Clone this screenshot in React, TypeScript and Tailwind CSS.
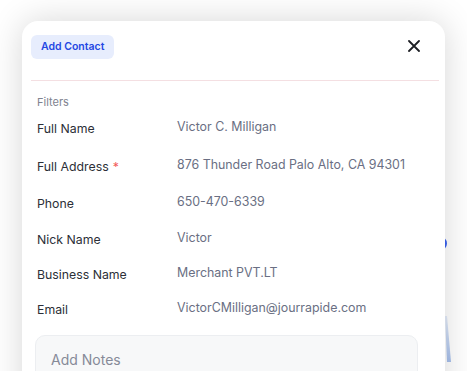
import React from "react";

const rows: { label: string; value: string; req?: boolean; h: string }[] = [
  { label: "Full Name", value: "Victor C. Milligan", h: "h-[38px]" },
  { label: "Full Address", value: "876 Thunder Road Palo Alto, CA 94301", req: true, h: "h-[37px]" },
  { label: "Phone", value: "650-470-6339", h: "h-[36px]" },
  { label: "Nick Name", value: "Victor", h: "h-[35px]" },
  { label: "Business Name", value: "Merchant PVT.LT", h: "h-[35px]" },
  { label: "Email", value: "VictorCMilligan@jourrapide.com", h: "h-[37px]" },
];

export default function App() {
  return (
    <div
      className="relative w-[467px] h-[371px] overflow-hidden bg-white"
      style={{ fontFamily: "Inter, 'Noto Sans', sans-serif" }}
    >
      {/* background content peeking behind the card */}
      <div className="absolute left-[432px] top-[236px] w-[15px] h-[15px] rounded-full border-[3px] border-[#3b63f0]" />
      <svg className="absolute left-[444px] top-[316px]" width="8" height="48" viewBox="0 0 8 48">
        <defs>
          <linearGradient id="lg" x1="0" y1="0" x2="0" y2="1">
            <stop offset="0" stopColor="#e4ecfa" />
            <stop offset="1" stopColor="#a6bfeb" />
          </linearGradient>
        </defs>
        <path d="M1 0 L3 0 L7 46 L3 46 Z" fill="url(#lg)" />
      </svg>

      <div className="pt-[21px] pl-[22px] relative">
        <div className="w-[423px] h-[400px] bg-white rounded-[16px] shadow-[0_0_34px_rgba(0,0,0,0.16)]">
          <div className="flex items-start justify-between pl-[9px] pr-[25px] pt-[14px] h-[59px]">
            <button className="h-[24px] px-[10px] rounded-[6px] bg-[#e7edfd] text-[#2448e3] text-[10.5px] font-semibold leading-[24px]">
              Add Contact
            </button>
            <svg
              className="mt-[5px]"
              width="12"
              height="12"
              viewBox="0 0 12 12"
              fill="none"
              stroke="#1d1f24"
              strokeWidth="1.8"
              strokeLinecap="round"
            >
              <path d="M1 1L11 11M11 1L1 11" />
            </svg>
          </div>
          <div className="ml-[9px] mr-[6px] h-px bg-[#f4dfe2]" />
          <div className="pl-[15px] pt-[13px]">
            <div className="text-[11px] leading-[16px] text-[#80838f] h-[23px]">Filters</div>
            {rows.map((r) => (
              <div key={r.label} className={`flex items-start ${r.h}`}>
                <div className="w-[140px] text-[12.3px] leading-[20px] text-[#2c2f37] pt-[2px]">
                  {r.label}
                  {r.req && <span className="text-[#f25b5b] ml-[4px]">*</span>}
                </div>
                <div className="text-[12.4px] leading-[20px] text-[#6a6f83]">{r.value}</div>
              </div>
            ))}
            <div className="ml-[-2px] w-[383px] h-[60px] rounded-[10px] bg-[#f7f8f9] border border-[#eceef1] pl-[15px] pt-[14px] text-[14px] leading-[20px] text-[#868a98]">
              Add Notes
            </div>
          </div>
        </div>
      </div>
    </div>
  );
}
